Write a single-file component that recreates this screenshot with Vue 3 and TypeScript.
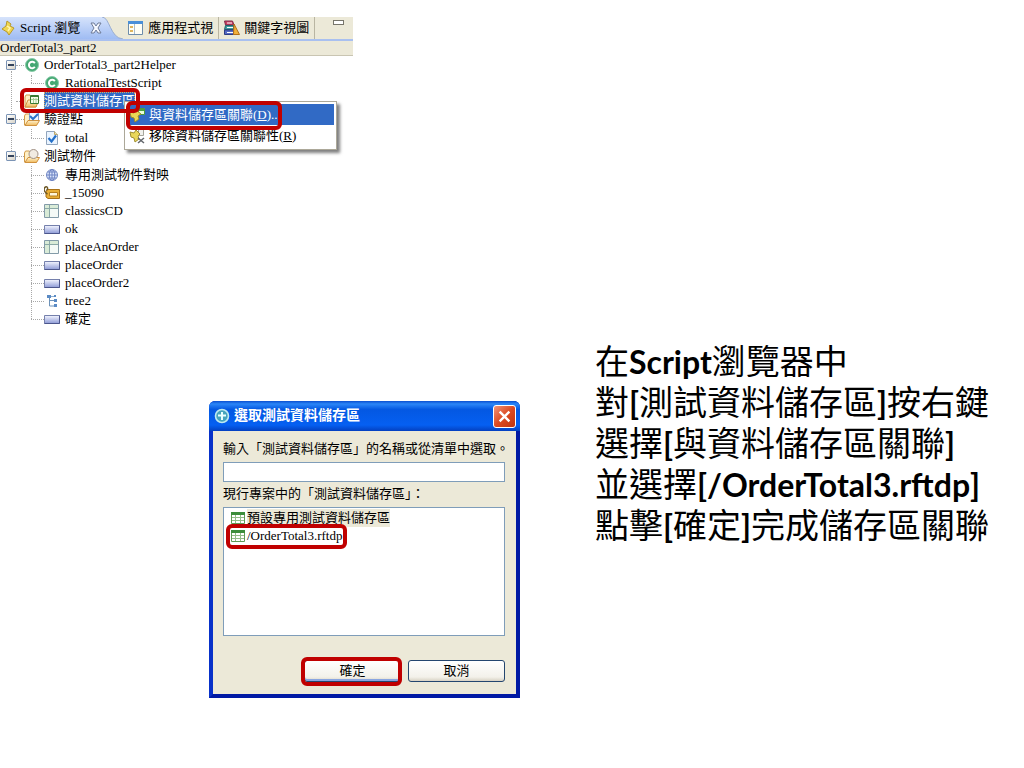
<script setup lang="ts">
import { ref } from 'vue'

interface TreeNode {
  label: string
  icon: string
  selected?: boolean
  children?: TreeNode[]
}

interface Segment {
  text: string
  latin: boolean
}

const tree: TreeNode[] = [
  {
    label: 'OrderTotal3_part2Helper',
    icon: 'class',
    children: [{ label: 'RationalTestScript', icon: 'class' }],
  },
  { label: '測試資料儲存區', icon: 'folder-data', selected: true },
  { label: '驗證點', icon: 'folder-check', children: [{ label: 'total', icon: 'check' }] },
  {
    label: '測試物件',
    icon: 'folder-object',
    children: [
      { label: '專用測試物件對映', icon: 'globe' },
      { label: '_15090', icon: 'tag' },
      { label: 'classicsCD', icon: 'frame' },
      { label: 'ok', icon: 'button' },
      { label: 'placeAnOrder', icon: 'frame' },
      { label: 'placeOrder', icon: 'button' },
      { label: 'placeOrder2', icon: 'button' },
      { label: 'tree2', icon: 'tree' },
      { label: '確定', icon: 'button' },
    ],
  },
]

const pools = ['預設專用測試資料儲存區', '/OrderTotal3.rftdp']
const poolName = ref('')

const notes = [
  '在Script瀏覽器中',
  '對[測試資料儲存區]按右鍵',
  '選擇[與資料儲存區關聯]',
  '並選擇[/OrderTotal3.rftdp]',
  '點擊[確定]完成儲存區關聯',
]

function split(line: string): Segment[] {
  const parts = line.match(/[\x20-\x7e]+|[^\x20-\x7e]+/g) ?? []
  return parts.map((text) => ({ text, latin: text.charCodeAt(0) < 128 }))
}
</script>

<template>
  <svg class="defs" width="0" height="0" aria-hidden="true">
    <defs>
      <linearGradient id="g-btn" x1="0" y1="0" x2="0" y2="1">
        <stop offset="0" stop-color="#f4f6ff" /><stop offset="1" stop-color="#8d9ad6" />
      </linearGradient>
      <linearGradient id="g-folder" x1="0" y1="0" x2="0" y2="1">
        <stop offset="0" stop-color="#fff3cf" /><stop offset="1" stop-color="#efb95c" />
      </linearGradient>
      <linearGradient id="g-tab" x1="0" y1="0" x2="0" y2="1">
        <stop offset="0" stop-color="#d6e3fb" /><stop offset="1" stop-color="#9fbcf3" />
      </linearGradient>
      <symbol id="i-class" viewBox="0 0 16 16">
        <circle cx="8" cy="8" r="6.5" fill="#45a873" stroke="#8accaa" />
        <path d="M10.8 6.2A3.2 3.2 0 1 0 10.8 9.8" fill="none" stroke="#fff" stroke-width="2" />
      </symbol>
      <symbol id="i-folder-data" viewBox="0 0 16 16">
        <path d="M1 14V4l1-2h4l1 2h5v10z" fill="#fff0c6" stroke="#d09a48" />
        <path d="M1 14l3-7h11l-3 7z" fill="url(#g-folder)" stroke="#d0913e" />
        <path d="M6.500 2.500h8v8h-8z" fill="#f4fbea" stroke="#397a34" />
        <path d="M6.500 3.500h8" stroke="#397a34" />
        <path d="M7 6.500h7M9.500 5v5M12 5v5" stroke="#a5cf98" />
      </symbol>
      <symbol id="i-folder-check" viewBox="0 0 16 16">
        <path d="M.500 14V5l1-2h4l1 2h6v9z" fill="#fff0c6" stroke="#d09a48" />
        <path d="M5.500 1.500h9v9h-9z" fill="#f3f8ff" stroke="#7d9fd0" />
        <path d="M1 14.500l3-5h11.500l-3 5z" fill="url(#g-folder)" stroke="#d0913e" />
        <path d="M6 5l3 3 5-5" fill="none" stroke="#2c73cb" stroke-width="2" />
      </symbol>
      <symbol id="i-folder-object" viewBox="0 0 16 16">
        <path d="M.500 14V5l1-2h4l1 2h6v9z" fill="#fff0c6" stroke="#d09a48" />
        <path d="M1 14.500l3-5h11.500l-3 5z" fill="url(#g-folder)" stroke="#d0913e" />
        <circle cx="9.500" cy="6" r="4.500" fill="#f1ebe2" stroke="#a09084" />
      </symbol>
      <symbol id="i-check" viewBox="0 0 16 16">
        <path d="M2.500 1.500h8l3 3v10h-11z" fill="#eaf4ff" stroke="#91a5bd" />
        <path d="M10.500 1.500v3h3" fill="#f3dfaa" stroke="#bca66a" />
        <path d="M4.500 8l3 3.500 4.500-6" fill="none" stroke="#2470c9" stroke-width="2.200" />
      </symbol>
      <symbol id="i-globe" viewBox="0 0 16 16">
        <circle cx="8" cy="8" r="5.500" fill="#dce6fb" stroke="#7288c4" />
        <path d="M2.500 8h11M3.500 5h9M3.500 11h9M8 2.500v11" stroke="#6d83c3" />
        <ellipse cx="8" cy="8" rx="2.800" ry="5.500" fill="none" stroke="#6d83c3" />
      </symbol>
      <symbol id="i-tag" viewBox="0 0 16 16">
        <path d="M2 6l2-1.500h11.500v9H4L2 12z" fill="#e9af35" stroke="#a87016" />
        <path d="M5.500 7.500h8v3.500h-8z" fill="#fff6d8" stroke="#b77f1c" />
        <path d="M3.500 9C-.500 7-.500 3 1.500 2s3 2 1 3" fill="none" stroke="#6c5828" stroke-width="1.400" />
      </symbol>
      <symbol id="i-frame" viewBox="0 0 16 16">
        <path d="M.500 1.500h14v13H.500z" fill="#f5faf7" stroke="#839ba8" />
        <path d="M1 2h13v3H1zM1 5h4v9H1z" fill="#d9ebd7" />
        <path d="M1 5.500h13M5.500 2v12" stroke="#8ba9a6" />
      </symbol>
      <symbol id="i-button" viewBox="0 0 16 16">
        <path d="M.500 4.500h15v8H.500z" fill="url(#g-btn)" stroke="#7580ac" />
        <path d="M.500 12.500h15v-8" fill="none" stroke="#4c568c" />
      </symbol>
      <symbol id="i-tree" viewBox="0 0 16 16">
        <path d="M5.500 4v9h5M5.500 7.500h5" fill="none" stroke="#6d92b8" />
        <path d="M3 2h4v3H3zM10 2h2v2h-2zM10 6h3v3h-3zM10 11h3v3h-3z" fill="#5a8ac4" />
        <path d="M7 3.500h3" stroke="#8fb0d2" />
      </symbol>
      <symbol id="i-grid" viewBox="0 0 16 16">
        <path d="M1.500 2.500h13v11h-13z" fill="#fff" stroke="#5f9a55" />
        <path d="M1 2h14v3H1z" fill="#3c8d3c" />
        <path d="M2 7.500h12M2 10.500h12M5.500 5v8M10.500 5v8" stroke="#94bd8a" />
      </symbol>
      <symbol id="i-script" viewBox="0 0 16 16">
        <path d="M6 1l4 3-1 2 4 2-5 7-2-3-5-3 4-3z" fill="#f0d650" stroke="#b89a2c" />
        <path d="M6 6l3 2-2 3" fill="none" stroke="#fff5b0" stroke-width="1.500" />
      </symbol>
      <symbol id="i-window" viewBox="0 0 16 16">
        <path d="M.500 1.500h14v13H.500z" fill="#fffef5" stroke="#6d8cab" />
        <path d="M0 1h15v3H0z" fill="#4a8fd8" />
        <path d="M2 6h3v2H2zM2 10h3v2H2z" fill="#dfb45c" />
        <path d="M6.500 4v10" stroke="#a9bccd" />
      </symbol>
      <symbol id="i-books" viewBox="0 0 16 16">
        <path d="M.500 1h8l1.500 4H1.500z" fill="#cc3d61" stroke="#7d2c4b" />
        <path d="M1.500 5.500h8v4H.500z" fill="#3e9c9c" stroke="#23616b" />
        <path d="M.500 10h9v4.500h-9z" fill="#566ac4" stroke="#2d3c83" />
        <path d="M10 4l5.500 10.500H9.500z" fill="#f2b13a" stroke="#b36e18" />
        <path d="M3 12.500h6M3 7.500h6M3 3h5" stroke="#fff" />
      </symbol>
      <symbol id="i-link" viewBox="0 0 16 16">
        <path d="M9.500 1.500h6v6h-6z" fill="#eaffdc" stroke="#4b9a3d" />
        <path d="M10 2h5v2h-5z" fill="#4ca33e" />
        <path d="M1 5l4 1 2-3 5 4-3 2 1 3-4 3-1-4-3-1z" fill="#ead756" stroke="#9d8a2a" />
      </symbol>
      <symbol id="i-unlink" viewBox="0 0 16 16">
        <path d="M9.500 1.500h5v6h-5z" fill="#f1f1ed" stroke="#a5a59b" />
        <path d="M1 4l4 1 2-3 4 4-2 2 1 3-4 3-1-4-3-1z" fill="#e9d75a" stroke="#a18f31" />
        <path d="M9 10l6 5M15 10l-6 5" stroke="#62666b" stroke-width="1.500" />
      </symbol>
      <symbol id="i-app" viewBox="0 0 16 16">
        <circle cx="8" cy="8" r="6.500" fill="#46a4bd" stroke="#bfeaf0" stroke-width="1.600" />
        <path d="M4 7.500h8M8 4v8" stroke="#e9ffff" stroke-width="2" />
      </symbol>
    </defs>
  </svg>

  <main class="slide">
    <section class="explorer" aria-label="Script 瀏覽">
      <div class="tabs">
        <button class="tab active" type="button">
          <svg class="icon"><use href="#i-script" /></svg>
          <span>Script 瀏覽</span>
          <svg class="tab-close" viewBox="0 0 12 12">
            <path d="M1 1h3l2 3 2-3h3L8 6l3 5H8L6 8l-2 3H1l3-5z" fill="#f5f8ff" stroke="#6f7c99" />
          </svg>
        </button>
        <svg class="tail" viewBox="0 0 24 24" preserveAspectRatio="none">
          <path d="M0 0C9 0 9 23 24 24H0z" fill="url(#g-tab)" />
          <path d="M0 0C9 0 9 23 24 24" fill="none" stroke="#8fa5cf" />
        </svg>
        <button class="tab" type="button">
          <svg class="icon"><use href="#i-window" /></svg>
          <span>應用程式視</span>
        </button>
        <button class="tab" type="button">
          <svg class="icon"><use href="#i-books" /></svg>
          <span>關鍵字視圖</span>
        </button>
        <button class="minimize" type="button" aria-label="最小化"></button>
      </div>
      <div class="crumb"><span>OrderTotal3_part2</span></div>

      <ul class="tree">
        <li v-for="node in tree" :key="node.label" class="branch">
          <div class="row">
            <button v-if="node.children" class="toggle" type="button" :aria-label="node.label"></button>
            <span v-else class="no-toggle"></span>
            <span class="stub"></span>
            <svg class="icon"><use :href="'#i-' + node.icon" /></svg>
            <span class="label" :class="{ selected: node.selected }">{{ node.label }}</span>
            <span v-if="node.selected" class="mark mark-node"></span>
          </div>
          <ul v-if="node.children" class="leaves">
            <li v-for="leaf in node.children" :key="leaf.label" class="row leaf">
              <span class="leaf-stub"></span>
              <svg class="icon"><use :href="'#i-' + leaf.icon" /></svg>
              <span class="label">{{ leaf.label }}</span>
            </li>
          </ul>
        </li>
      </ul>

      <div class="menu" role="menu">
        <button class="item hot" type="button" role="menuitem">
          <svg class="icon"><use href="#i-link" /></svg>
          <span>與資料儲存區關聯(<u>D</u>)...</span>
          <span class="mark mark-item"></span>
        </button>
        <button class="item" type="button" role="menuitem">
          <svg class="icon"><use href="#i-unlink" /></svg>
          <span>移除資料儲存區關聯性(<u>R</u>)</span>
        </button>
      </div>
    </section>

    <div class="lower">
      <section class="dialog" role="dialog" aria-labelledby="dialog-title">
        <header class="title-bar">
          <svg class="icon"><use href="#i-app" /></svg>
          <h2 id="dialog-title">選取測試資料儲存區</h2>
          <button class="close" type="button" aria-label="關閉">
            <svg viewBox="0 0 12 12"><path d="M1.500 1.500l9 9M10.500 1.500l-9 9" stroke="#fff" stroke-width="2.200" /></svg>
          </button>
        </header>
        <form class="body" @submit.prevent>
          <label for="pool-name">輸入「測試資料儲存區」的名稱或從清單中選取。</label>
          <input id="pool-name" v-model="poolName" type="text" />
          <span id="pool-label" class="list-label">現行專案中的「測試資料儲存區」：</span>
          <ul class="pools" role="listbox" aria-labelledby="pool-label">
            <li v-for="(pool, i) in pools" :key="pool" role="option" class="pool">
              <svg class="icon"><use href="#i-grid" /></svg>
              <span :class="{ current: i === 0 }">{{ pool }}</span>
              <span v-if="i === 1" class="mark mark-pool"></span>
            </li>
          </ul>
          <div class="actions">
            <button class="xp default" type="submit">確定<span class="mark mark-ok"></span></button>
            <button class="xp" type="button">取消</button>
          </div>
        </form>
      </section>

      <div class="notes">
        <p v-for="line in notes" :key="line">
          <span v-for="(part, i) in split(line)" :key="i" :class="{ latin: part.latin }">{{ part.text }}</span>
        </p>
      </div>
    </div>
  </main>
</template>

<style>
body {
  background: #fff;
}
</style>

<style scoped>
.defs {
  position: absolute;
}

.slide {
  display: flex;
  flex-direction: column;
  min-height: 100vh;
  box-sizing: border-box;
  padding-top: 17px;
  overflow: hidden;
  font: 13px/18px "Liberation Serif", "Noto Sans CJK TC", serif;
  color: #000;
}

button,
input {
  font: inherit;
  color: inherit;
  margin: 0;
}

ul,
p,
h2 {
  margin: 0;
  padding: 0;
  list-style: none;
}

.icon {
  flex: none;
  width: 16px;
  height: 16px;
}

.mark {
  position: absolute;
  box-sizing: border-box;
  border: 4px solid #c00000;
  border-radius: 6px;
  z-index: 2;
  pointer-events: none;
}

.explorer {
  position: relative;
  width: 34.5%;
  min-width: 353px;
  min-height: 311px;
  white-space: nowrap;
}

.tabs {
  display: flex;
  height: 22px;
  background: #ece9d8;
  border-bottom: 2px solid #a9c0f0;
}

.tab {
  display: flex;
  align-items: center;
  gap: 4px;
  padding: 0 5px;
  border: 0;
  border-right: 1px solid #b9b5a2;
  background: transparent;
}

.tab.active {
  gap: 3px;
  padding: 0 0 0 1px;
  border: 0;
  background: linear-gradient(#d6e3fb, #9fbcf3);
}

.tab-close {
  width: 12px;
  height: 12px;
  margin-left: 7px;
}

.tail {
  flex: none;
  width: 21px;
  height: 22px;
}

.minimize {
  width: 11px;
  height: 5px;
  margin: 3px 9px 0 auto;
  padding: 0;
  border: 1px solid #77756b;
  background: #fff;
}

.crumb {
  display: flex;
  align-items: center;
  height: 14px;
  border-bottom: 1px solid #c9c5b2;
  background: #ece9d8;
}

.tree {
  position: relative;
  padding-left: 6px;
}

.tree::before {
  content: "";
  position: absolute;
  left: 11px;
  top: 15px;
  height: 84px;
  border-left: 1px dotted #a8a8a8;
}

.row {
  position: relative;
  display: flex;
  align-items: center;
  height: 18px;
}

.toggle {
  position: relative;
  width: 10px;
  height: 10px;
  padding: 0;
  border: 1px solid #7b94b5;
  border-radius: 1px;
  background: linear-gradient(135deg, #fff, #d7d3c8);
}

.toggle::before {
  content: "";
  position: absolute;
  left: 1px;
  right: 1px;
  top: 3px;
  height: 2px;
  background: #33435c;
}

.no-toggle {
  width: 10px;
}

.stub {
  width: 8px;
  border-top: 1px dotted #a8a8a8;
}

.label {
  margin-left: 4px;
}

.leaf .label {
  margin-left: 5px;
}

.label.selected {
  background: #316ac5;
  color: #fff;
  outline: 1px dotted #d8a860;
  outline-offset: -1px;
}

.leaves {
  position: relative;
  margin-left: 25px;
  padding-top: 1px;
}

.branch:first-child .leaves {
  padding-top: 0;
}

.leaves::before {
  content: "";
  position: absolute;
  left: 0;
  top: 1px;
  bottom: 9px;
  border-left: 1px dotted #a8a8a8;
}

.leaf-stub {
  width: 13px;
  border-top: 1px dotted #a8a8a8;
}

.mark-node {
  left: 14px;
  top: -4px;
  width: 120px;
  height: 25px;
}

.menu {
  position: absolute;
  left: 124px;
  top: 84px;
  width: 213px;
  box-sizing: border-box;
  padding: 2px 2px 3px;
  border: 1px solid #aca899;
  background: #fff;
  box-shadow: 3px 3px 3px rgba(0, 0, 0, 0.5);
}

.item {
  position: relative;
  display: flex;
  align-items: center;
  gap: 4px;
  width: 100%;
  height: 21px;
  padding: 0 2px;
  border: 0;
  background: #fff;
}

.item.hot {
  background: #316ac5;
  color: #fff;
}

.mark-item {
  left: -1px;
  top: -3px;
  width: 156px;
  height: 29px;
}

.lower {
  display: flex;
  align-items: flex-start;
  gap: 75px;
  padding: 12px 0 0 209px;
}

.dialog {
  flex: 0 0 311px;
  min-width: 0;
  box-sizing: border-box;
  width: 311px;
  margin-top: 61px;
  border: solid #0831c9;
  border-width: 0 4px 4px;
  border-right-color: #0019a4;
  border-bottom-color: #0019a4;
  border-radius: 6px 6px 0 0;
  background: #0831c9;
  white-space: nowrap;
}

.title-bar {
  display: flex;
  align-items: center;
  gap: 4px;
  height: 30px;
  margin: 0 -4px;
  padding: 0 4px 0 5px;
  border-radius: 6px 6px 0 0;
  background: linear-gradient(#0a4fd0, #2b86f7 10%, #0458e2 28%, #0560f2 80%, #0440c0);
  color: #fff;
}

.title-bar h2 {
  flex: 1;
  font: bold 14px/20px "Liberation Serif", "Noto Sans CJK TC", serif;
}

.close {
  display: grid;
  place-items: center;
  width: 23px;
  height: 23px;
  padding: 0;
  border: 1px solid #fff;
  border-radius: 3px;
  background: linear-gradient(135deg, #f0947a, #dc4a22 50%, #c0340f);
}

.close svg {
  width: 13px;
  height: 13px;
}

.body {
  display: flex;
  flex-direction: column;
  padding: 9px 11px 12px 10px;
  background: #ece9d8;
}

.body input {
  box-sizing: border-box;
  width: 100%;
  height: 20px;
  margin: 4px 0 3px;
  border: 1px solid #7f9db9;
  background: #fff;
}

.pools {
  height: 127px;
  margin-top: 4px;
  border: 1px solid #7f9db9;
  background: #fff;
}

.pool {
  position: relative;
  display: flex;
  align-items: center;
  gap: 1px;
  height: 18px;
  padding-left: 6px;
}

.pool:first-child {
  margin-top: 1px;
}

.current {
  background: #ece9d8;
}

.mark-pool {
  left: 2px;
  top: -3px;
  width: 121px;
  height: 25px;
}

.actions {
  display: flex;
  justify-content: flex-end;
  gap: 7px;
  margin-top: 24px;
}

.xp {
  position: relative;
  width: 97px;
  height: 22px;
  padding: 0;
  border: 1px solid #24466f;
  border-radius: 3px;
  background: linear-gradient(#fff, #f3f1ea 80%, #d8d2c4);
}

.xp.default {
  box-shadow: inset 0 -2px #8aa5e0;
}

.mark-ok {
  left: -4px;
  top: -4px;
  width: 101px;
  height: 29px;
}

.notes {
  flex: 1;
  font: 34px/41px Lato, "Noto Sans CJK TC", sans-serif;
  white-space: nowrap;
}

.notes p {
  height: 41px;
}

.latin {
  font-weight: bold;
  font-size: 32px;
  line-height: 30px;
}
</style>
